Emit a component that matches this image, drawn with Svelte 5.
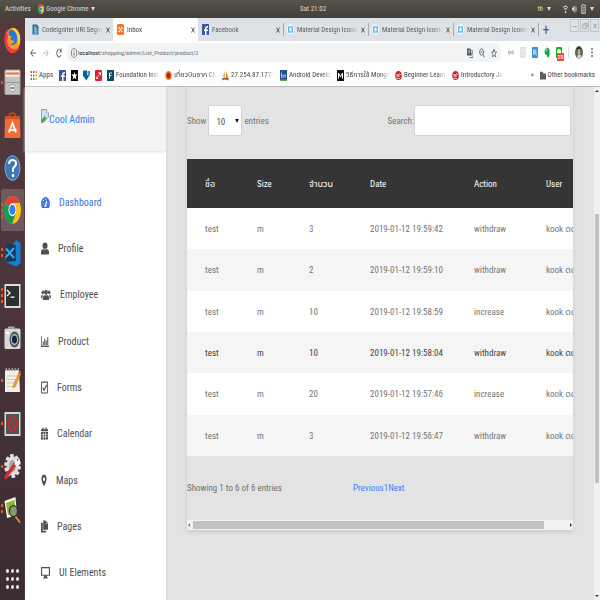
<script>
  const tabs = [
    { title: 'CodeIgniter URI Segme', icon: 'doc' },
    { title: 'Inbox', icon: 'xampp', active: true },
    { title: 'Facebook', icon: 'fb' },
    { title: 'Material Design Iconic F', icon: 'mat', sep: true },
    { title: 'Material Design Iconic F', icon: 'mat', sep: true },
    { title: 'Material Design Iconic F', icon: 'mat', sep: true }
  ];
  const bookmarks = [
    { icon: 'apps', title: 'Apps', w: 29 },
    { icon: 'fb', title: '', w: 12 },
    { icon: 'star', title: '', w: 12 },
    { icon: 'down', title: '', w: 12 },
    { icon: 'red', title: '', w: 12 },
    { icon: 'found', title: 'Foundation Insi', w: 58 },
    { icon: 'sun', title: 'เที่ยวบินจาก CNX', w: 57 },
    { icon: 'pma', title: '27.254.87.177:81', w: 58 },
    { icon: 'bn', title: 'Android Develop', w: 57 },
    { icon: 'med', title: 'วิธีการใช้ Mongo', w: 58 },
    { icon: 'cir', title: 'Beginner Learni', w: 57 },
    { icon: 'cir', title: 'Introductory Jav', w: 57 }
  ];
  const menu = [
    { title: 'Dashboard', w: 9, icon: 'dash', active: true },
    { title: 'Profile', w: 8, icon: 'user' },
    { title: 'Employee', w: 10, icon: 'users' },
    { title: 'Product', w: 8, icon: 'chart' },
    { title: 'Forms', w: 7, icon: 'check' },
    { title: 'Calendar', w: 7, icon: 'cal' },
    { title: 'Maps', w: 6, icon: 'pin' },
    { title: 'Pages', w: 7, icon: 'copy' },
    { title: 'UI Elements', w: 9, icon: 'desk' }
  ];
  const dock = [
    { name: 'firefox', label: 'Firefox', dots: 0 },
    { name: 'files', label: 'Files', dots: 1 },
    { name: 'soft', label: 'Ubuntu Software', dots: 0 },
    { name: 'help', label: 'Help', dots: 0 },
    { name: 'chrome', label: 'Google Chrome', dots: 3, active: true },
    { name: 'code', label: 'Visual Studio Code', dots: 2 },
    { name: 'term', label: 'Terminal', dots: 3 },
    { name: 'cam', label: 'Shotwell', dots: 0 },
    { name: 'note', label: 'Text Editor', dots: 1 },
    { name: 'no', label: 'Blocked window', dots: 1 },
    { name: 'gear', label: 'Settings', dots: 1 },
    { name: 'find', label: 'Image Viewer', dots: 2 }
  ];
  const columns = ['ชื่อ', 'Size', 'จำนวน', 'Date', 'Action', 'User'];
  const rows = [
    ['test', 'm', '3', '2019-01-12 19:59:42', 'withdraw', 'kook ดด'],
    ['test', 'm', '2', '2019-01-12 19:59:10', 'withdraw', 'kook ดด'],
    ['test', 'm', '10', '2019-01-12 19:58:59', 'increase', 'kook ดด'],
    ['test', 'm', '10', '2019-01-12 19:58:04', 'withdraw', 'kook ดด'],
    ['test', 'm', '20', '2019-01-12 19:57:46', 'increase', 'kook ดด'],
    ['test', 'm', '3', '2019-01-12 19:56:47', 'withdraw', 'kook ดด']
  ];
  let query = $state('');
</script>

{#snippet chromeLogo()}
  <circle cx="12" cy="12" r="12" fill="#fbc116" />
  <path d="M12 12 1.6 6A12 12 0 0 1 22.4 6H12Z" fill="#db4437" />
  <path d="M1.6 6A12 12 0 0 0 12 24L17 15 12 12Z" fill="#109d58" />
  <path d="M22.4 6H12v6l5 3-5 9A12 12 0 0 0 22.4 6Z" fill="#fbc116" />
  <circle cx="12" cy="12" r="5.6" fill="#fff" />
  <circle cx="12" cy="12" r="4.4" fill="#3b7df0" />
{/snippet}

{#snippet fav(name)}
  <svg class="fav" viewBox="0 0 14 22" preserveAspectRatio="none" aria-hidden="true">
    {#if name === 'doc'}
      <path d="M1 1h9l3 4v16H1Z" fill="#1d6e9f" /><path d="M4 6h5M4 10h7M4 14h7M4 18h7" stroke="#fff" stroke-width="1.6" />
    {:else if name === 'xampp'}
      <rect width="14" height="22" rx="3" fill="#f37623" /><path d="M4 6l6 10M10 6L4 16M4 6v4M10 6v4M4 16v-3M10 16v-3" stroke="#fff" stroke-width="1.600" />
    {:else if name === 'fb'}
      <rect width="14" height="22" rx="1" fill="#3b5a9a" /><path d="M9 22v-8h3v-3H9V9q0-2 3-2V4Q6 3 6 9v2H4v3h2v8Z" fill="#fff" />
    {:else if name === 'mat'}
      <ellipse cx="7" cy="11" rx="7" ry="10" fill="#fff" /><rect x="3.5" y="6" width="7" height="10" fill="none" stroke="#4aaee8" stroke-width="2.5" />
    {:else if name === 'apps'}
      <path d="M1 4h3M6 4h3M1 11h3" stroke="#e2483c" stroke-width="4" /><path d="M11 4h3M11 11h3" stroke="#f0a030" stroke-width="4" /><path d="M6 11h3" stroke="#4286f4" stroke-width="4" /><path d="M1 18h3M6 18h3" stroke="#2fa35a" stroke-width="4" /><path d="M11 18h3" stroke="#f0c030" stroke-width="4" />
    {:else if name === 'star'}
      <rect width="14" height="22" fill="#0a0a0a" /><path d="M7 4l1.6 5H13l-3.400 4 1.200 6L7 15.500 3.200 19l1.200-6L1 9h4.400Z" fill="#fff" />
    {:else if name === 'down'}
      <path d="M0 1h8v9h5l-6 11L0 12Z" fill="#0b6796" /><path d="M9 2h5v10L9 8Z" fill="#2796c8" />
    {:else if name === 'red'}
      <rect width="14" height="22" rx="2" fill="#ea1d2c" /><path d="M3 12l4 6H3ZM6 5h6v7Z" fill="#fff" /><path d="M2 18L12 4" stroke="#fff" />
    {:else if name === 'found'}
      <rect width="14" height="22" fill="#104a64" /><path d="M5 17V6h5M5 11h4" fill="none" stroke="#fff" stroke-width="1.800" />
    {:else if name === 'sun'}
      <ellipse cx="7" cy="11" rx="6.500" ry="9" fill="#f08a2c" /><ellipse cx="7" cy="11" rx="4" ry="6" fill="#bd1e24" />
    {:else if name === 'pma'}
      <path d="M6 1v13H1Z" fill="#f7b65d" /><path d="M8 3l5 12H8Z" fill="#ed842b" /><path d="M0 17q7-4 14 0l-2 4Q6 17 1 21Z" fill="#8e5b4c" />
    {:else if name === 'bn'}
      <rect width="14" height="22" fill="#295090" /><path d="M3 5v10h3v-5H3M8 15v-5h3v5" fill="none" stroke="#d7e4f5" stroke-width="1.300" /><path d="M0 19h14v3H0z" fill="#66a34e" />
    {:else if name === 'med'}
      <rect width="14" height="22" fill="#111" /><path d="M3 17V6l4 8 4-8v11" fill="none" stroke="#fff" stroke-width="2" />
    {:else}
      <ellipse cx="7" cy="11" rx="6.500" ry="9" fill="#c9222d" /><path d="M4 15V8l4 6V8M8 6l4 4M3 17h7" fill="none" stroke="#fff" stroke-width="1.300" />
    {/if}
  </svg>
{/snippet}

<div class="desktop">
  <header class="topbar">
    <span class="act">Activities</span>
    <span class="appname">
      <svg class="mini" viewBox="0 0 24 24" preserveAspectRatio="none">{@render chromeLogo()}</svg>
      Google Chrome <i class="caret"></i>
    </span>
    <span class="clock">Sat 21:02</span>
    <span class="status">
      th <i class="caret"></i>
      <svg class="st wifi" viewBox="0 0 16 22" preserveAspectRatio="none"><path d="M1 8q7-7 14 0M4 12q4-4 8 0" fill="none" stroke="#ddd9d0" stroke-width="2.500" /><circle cx="8" cy="18" r="2.500" fill="#ddd9d0" /></svg>
      <svg class="st" viewBox="0 0 16 22" preserveAspectRatio="none"><path d="M0 8h3l5-6v18l-5-6H0Z" fill="#ddd9d0" /><path d="M10 7q3 4 0 8M12 4q5 7 0 14" fill="none" stroke="#ddd9d0" stroke-width="1.500" /></svg>
      <svg class="st" viewBox="0 0 14 24" preserveAspectRatio="none"><path d="M2 3h3V1h4v2h3v20H2Z" fill="none" stroke="#ddd9d0" stroke-width="2" /><path d="M4 8h6M4 12h6M4 16h6M4 20h6" stroke="#ddd9d0" stroke-width="2" /></svg>
      <i class="caret"></i>
    </span>
  </header>

  <div class="body">
    <nav class="dock" aria-label="Dock">
      <ul>
        {#each dock as d}
          <li class:active={d.active}>
            <span class="dots">{#each Array(d.dots) as _}<i></i>{/each}</span>
            <button aria-label={d.label}>
              <svg viewBox="0 0 34 56" preserveAspectRatio="none" aria-hidden="true">
                {#if d.name === 'firefox'}
                  <ellipse cx="17" cy="29" rx="15" ry="25" fill="#ff9a1f" />
                  <path d="M7 5Q0 15 1 31q3 22 16 23 10-1 14-12-12 10-21-1Q4 33 8 21 5 12 7 5Z" fill="#f2394b" />
                  <path d="M17 3q11 1 15 16 2 13-3 22 0-18-6-26-5-5-6-12Z" fill="#ffcf35" />
                  <path d="M10 9q9-4 14 5 5 11 0 20-5 7-12 2 8 0 9-6-5-1-9-4l4-5-6-2q-2-6 0-10Z" fill="#2477dd" />
                {:else if d.name === 'files'}
                  <rect x="1" y="3" width="32" height="51" rx="3" fill="#a3a3a0" /><rect x="3" y="5" width="28" height="14" fill="#e9e8e4" /><path d="M4 11h26" stroke="#df7a3c" stroke-width="4" /><rect x="3" y="18" width="28" height="34" fill="#c2c2bf" /><path d="M3 29h28" stroke="#888" stroke-width="1.500" /><rect x="12" y="34" width="10" height="12" rx="2" fill="#f5f5f5" stroke="#777" /><path d="M14 40h6" stroke="#555" stroke-width="3" />
                {:else if d.name === 'soft'}
                  <path d="M11 16V8q6-9 12 0v8" fill="none" stroke="#cc4b1c" stroke-width="3" /><path d="M2 11h30l1 43H1Z" fill="#ef6d35" /><path d="M2 11h30v5H2z" fill="#d7501e" /><path d="M10 43 17 24l7 19M9 38h16" fill="none" stroke="#fff" stroke-width="3.500" />
                {:else if d.name === 'help'}
                  <ellipse cx="17" cy="28" rx="15" ry="25" fill="#3f79b4" stroke="#9bbcdc" stroke-width="1.500" /><path d="M10 20q1-9 8-8 9 2 5 11l-5 6v7" fill="none" stroke="#fff" stroke-width="4" /><ellipse cx="18" cy="43" rx="2.500" ry="3.500" fill="#fff" />
                {:else if d.name === 'chrome'}
                  <g transform="scale(1.4 2.3)">{@render chromeLogo()}</g>
                {:else if d.name === 'code'}
                  <path d="M24 2l9 6v40l-9 7L5 47v-5l18 2V12L3 42l-2-4Z" fill="#1480cf" /><path d="M3 9l20 3v32L5 46Z" fill="#17395a" /><path d="M4 19l16 19M4 36l16-18" stroke="#3ba8f2" stroke-width="4" />
                {:else if d.name === 'term'}
                  <rect x="1" y="4" width="32" height="48" fill="#dedede" /><rect x="4" y="8" width="26" height="40" fill="#2b2f30" /><path d="M6 16l6 6-6 6M13 30h8" fill="none" stroke="#fff" stroke-width="2.500" />
                {:else if d.name === 'cam'}
                  <rect x="1" y="9" width="32" height="41" rx="3" fill="#d8d8d4" /><path d="M8 9h13V5H8z" fill="#aaa" /><ellipse cx="21" cy="31" rx="10" ry="16" fill="#555b60" /><ellipse cx="21" cy="31" rx="7" ry="11" fill="#b7c1c8" /><ellipse cx="21" cy="31" rx="5" ry="8" fill="#14233c" /><path d="M4 15h6v5H4z" fill="#fff" />
                {:else if d.name === 'note'}
                  <path d="M2 6h28l2 44H2Z" fill="#f2f0e6" /><path d="M3 5h27" stroke="#989898" stroke-width="6" stroke-dasharray="3 3" /><path d="M6 18h20M6 25h18M6 32h14M6 39h18" stroke="#bdbdb4" stroke-width="1.500" /><path d="M18 42l2-9L31 9l3 4-11 25Z" fill="#f4a02c" stroke="#b6661c" /><path d="M29 12l3-6 3 5-2 5Z" fill="#d9414e" />
                {:else if d.name === 'no'}
                  <rect x="1" y="4" width="32" height="48" fill="#d8d8d8" /><rect x="4" y="8" width="26" height="40" fill="#535353" /><ellipse cx="17" cy="28" rx="8" ry="13" fill="none" stroke="#cc2d2d" stroke-width="3" /><path d="M12 18L22 38" stroke="#cc2d2d" stroke-width="3" />
                {:else if d.name === 'gear'}
                  <ellipse cx="17" cy="28" rx="13.500" ry="21" fill="none" stroke="#e6e6e6" stroke-width="6" stroke-dasharray="7 4" /><ellipse cx="17" cy="28" rx="12" ry="20" fill="#dcdcdc" /><ellipse cx="17" cy="28" rx="7" ry="12" fill="#a9a9a9" /><path d="M4 50L22 24" stroke="#d0312d" stroke-width="7" stroke-linecap="round" /><path d="M21 25l1-12 5 6 3-8 3 10-6 9Z" fill="#f6f6f6" />
                {:else}
                  <path d="M1 12l22-8 3 36-20 6Z" fill="#f5f6ef" /><path d="M4 16l17-6 2 25-15 5Z" fill="#8cb935" /><path d="M22 42l10 13" stroke="#d79a36" stroke-width="3.500" /><ellipse cx="19" cy="32" rx="8" ry="11" fill="#8a9a6b" stroke="#2b2b2b" stroke-width="2.500" />
                {/if}
              </svg>
            </button>
          </li>
        {/each}
      </ul>
      <button class="launcher" aria-label="Show applications">
        {#each Array(9) as _}<i></i>{/each}
      </button>
    </nav>

    <div class="window">
      <div class="tabs">
        {#each tabs as t}
          <div class="tab" class:on={t.active} class:sep={t.sep}>
            {@render fav(t.icon)}
            <span class="fade">{t.title}</span>
            <button aria-label="Close tab"><svg viewBox="0 0 8 12" preserveAspectRatio="none"><path d="M1 1l6 10M7 1L1 11" stroke="#4e5257" stroke-width="1.800" /></svg></button>
          </div>
        {/each}
        <button class="plus" aria-label="New tab">+</button>
        <div class="wm">
          <button aria-label="Minimise"><svg viewBox="0 0 10 14"><path d="M2 8h6" stroke="#999" stroke-width="1.500" /></svg></button>
          <button aria-label="Restore"><svg viewBox="0 0 10 14"><path d="M1 5h6v7H1zM3 5V2h6v7H7" fill="none" stroke="#999" stroke-width="1.200" /></svg></button>
          <button aria-label="Close"><svg viewBox="0 0 10 14"><path d="M2 3l6 8M8 3l-6 8" stroke="#999" stroke-width="1.500" /></svg></button>
        </div>
      </div>

      <div class="toolbar">
        <button aria-label="Back"><svg viewBox="0 0 14 20" preserveAspectRatio="none"><path d="M14 10H2M7 3l-5 7 5 7" fill="none" stroke="#50555a" stroke-width="2" /></svg></button>
        <button aria-label="Forward"><svg viewBox="0 0 14 20" preserveAspectRatio="none"><path d="M0 10h12M7 3l5 7-5 7" fill="none" stroke="#b5b8bb" stroke-width="2" /></svg></button>
        <button aria-label="Reload"><svg viewBox="0 0 14 20" preserveAspectRatio="none"><path d="M12 6Q8 0 4 4-1 11 4 17q5 3 8-3M12 1v7H8" fill="none" stroke="#50555a" stroke-width="2" /></svg></button>
        <div class="omni">
          <svg class="info" viewBox="0 0 14 20" preserveAspectRatio="none"><ellipse cx="7" cy="10" rx="6" ry="9" fill="none" stroke="#5f6368" stroke-width="1.500" /><path d="M7 9v6M7 5v2" stroke="#5f6368" stroke-width="2" /></svg>
          <span class="url"><b>localhost</b>/shopping/admin/List_Product/product/2</span>
          <svg viewBox="0 0 14 20" preserveAspectRatio="none"><path d="M0 1h8l3 14H0Z" fill="#555a5f" /><path d="M7 5h7v14H6" fill="none" stroke="#555a5f" stroke-width="1.500" /><path d="M3 6h4M5 5v6" stroke="#fff" stroke-width="1.300" /><path d="M9 9h4l-3 6" fill="none" stroke="#555a5f" /></svg>
          <svg viewBox="0 0 14 20" preserveAspectRatio="none"><ellipse cx="6" cy="8" rx="4.500" ry="6.500" fill="none" stroke="#555a5f" stroke-width="1.800" /><path d="M9 13l4 6M4 8h4" stroke="#555a5f" stroke-width="1.800" /></svg>
          <svg viewBox="0 0 14 20" preserveAspectRatio="none"><path d="M7 2l1.600 6H13l-3.500 4 1.300 6L7 14.500 3.200 18l1.300-6L1 8h4.400Z" fill="none" stroke="#555a5f" stroke-width="1.600" /></svg>
        </div>
        <div class="ext">
          <svg viewBox="0 0 14 22" preserveAspectRatio="none"><path d="M3 7q-3 4 0 8M11 7q3 4 0 8M5 9l4 4M9 9l-4 4" fill="none" stroke="#666" stroke-width="1.500" /></svg>
          <svg viewBox="0 0 14 22" preserveAspectRatio="none"><rect width="14" height="22" rx="2" fill="#e2e2e2" /><path d="M3 7h8M3 12h8M3 17h5" stroke="#f7f7f7" stroke-width="2" /></svg>
          <svg viewBox="0 0 14 22" preserveAspectRatio="none"><rect width="14" height="22" rx="2" fill="#3a8fda" /><path d="M4 16V6h3M4 11h3M9 5v9q0 3 2 2" fill="none" stroke="#fff" stroke-width="1.800" /></svg>
          <svg viewBox="0 0 14 22" preserveAspectRatio="none"><path d="M1 8l5-7q7 0 7 7 1 10-3 13-4 0-3-5-6 0-6-8Z" fill="#12a84a" /><path d="M6 1v7H1" fill="none" stroke="#fff" /></svg>
          <span class="badged">
            <svg viewBox="0 0 14 22" preserveAspectRatio="none"><rect width="14" height="22" rx="3" fill="#09b40b" /><ellipse cx="7" cy="10" rx="5" ry="6" fill="#fff" /></svg>
            <em>29</em>
          </span>
          <i class="bar"></i>
          <svg class="avatar" viewBox="0 0 16 24" preserveAspectRatio="none"><ellipse cx="8" cy="12" rx="8" ry="12" fill="#5d6b54" /><path d="M3 4q6-6 9 1l-2 7-5-1Z" fill="#3c2b29" /><ellipse cx="8" cy="10" rx="3" ry="5" fill="#c9a596" /><path d="M4 22q0-7 5-7 4 1 4 6-4 5-9 1Z" fill="#cfd1d4" /></svg>
          <svg class="dots3" viewBox="0 0 6 22" preserveAspectRatio="none"><path d="M1 2h4v4H1zM1 9h4v4H1zM1 16h4v4H1z" fill="#5a5e62" /></svg>
        </div>
      </div>

      <div class="bookmarks">
        {#each bookmarks as b}
          <a href="#bookmark" style="width:{b.w}px" aria-label={b.title || b.icon}>
            {@render fav(b.icon)}
            {#if b.title}<span class="fade">{b.title}</span>{/if}
          </a>
        {/each}
        <span class="more">»</span>
        <a href="#other" class="other">
          <svg class="fav" viewBox="0 0 14 22" preserveAspectRatio="none"><path d="M0 2h6l2 4h6v15H0Z" fill="#5a5e62" /></svg>
          Other bookmarks
        </a>
      </div>

      <div class="page">
        <aside>
          <a class="logo" href="#home">
            <svg viewBox="0 0 16 26" preserveAspectRatio="none"><path d="M1 1h10l4 6v8L5 25H1Z" fill="#cbdcf5" stroke="#8b8f93" stroke-width="1.500" /><path d="M1 21L7 13l4 4-7 8H1Z" fill="#4ca147" /><path d="M11 1v6h4" fill="#fff" stroke="#8b8f93" /><path d="M4 8q2-3 4 0Z" fill="#fff" /></svg><span>Cool Admin</span>
          </a>
          <ul>
            {#each menu as m}
              <li>
                <a href="#menu" class:cur={m.active}>
                  <svg style="width:{m.w}px" viewBox="0 0 16 24" preserveAspectRatio="none" fill="currentColor" aria-hidden="true">
                    {#if m.icon === 'dash'}
                      <path d="M2 22q-2-4-2-8Q1 3 8 2q7 1 8 12 0 4-2 8Z" /><path d="M8 18l2-9M3 14h1M4 8l1 1M8 5v2M12 14h1" stroke="#fff" stroke-width="2" /><circle cx="8" cy="18" r="2" fill="#fff" />
                    {:else if m.icon === 'user'}
                      <ellipse cx="8" cy="7" rx="5" ry="6" /><path d="M0 23v-4q0-5 4-6 4 2 8 0 4 1 4 6v4Z" />
                    {:else if m.icon === 'users'}
                      <ellipse cx="8" cy="8" rx="3" ry="5" /><ellipse cx="3" cy="8" rx="2" ry="3.500" /><ellipse cx="13" cy="8" rx="2" ry="3.500" /><path d="M3 22v-4q0-4 3-5 2 2 4 0 3 1 3 5v4ZM0 17q0-5 3-4l-1 6H0ZM16 17q0-5-3-4l1 6h2Z" />
                    {:else if m.icon === 'chart'}
                      <path d="M0 2h1.500v18H16v2H0ZM3.500 12h2v7h-2ZM6.500 7h2v12h-2ZM9.500 10h2v9h-2ZM12.500 4h2v15h-2Z" />
                    {:else if m.icon === 'check'}
                      <rect x="1" y="2" width="14" height="20" rx="1" fill="none" stroke="currentColor" stroke-width="2" /><path d="M4 12l3 5 6-10" fill="none" stroke="currentColor" stroke-width="2.500" />
                    {:else if m.icon === 'cal'}
                      <path d="M0 4h3V1h3v3h4V1h3v3h3v4H0ZM0 9h16v14H0Z" /><path d="M1 14h14M1 18h14M5.500 10v12M10.500 10v12" stroke="#fff" stroke-width="1.300" />
                    {:else if m.icon === 'pin'}
                      <path fill-rule="evenodd" d="M8 1q7 1 7 9-1 5-7 13Q2 15 1 10 1 2 8 1Zm0 5q-3 1-3 4t3 3q3 0 3-3T8 6Z" />
                    {:else if m.icon === 'copy'}
                      <path d="M5 1h6v6h5v11H5ZM12 1l4 5h-4ZM0 5h4v15h8v3H0Z" />
                    {:else}
                      <path d="M1 3h14v14H1Z" fill="none" stroke="currentColor" stroke-width="2" /><path d="M6 17h4l1 4h1v2H4v-2h1Z" />
                    {/if}
                  </svg>
                  {m.title}
                </a>
              </li>
            {/each}
          </ul>
        </aside>

        <main>
          <section class="card">
            <div class="controls">
              <label>Show
                <span class="sel"><select><option>10</option><option>25</option><option>50</option></select></span>
                entries</label>
              <label class="search">Search:<input type="search" bind:value={query} /></label>
            </div>
            <div class="clip">
              <table>
                <colgroup><col class="c1" /><col class="c2" /><col class="c3" /><col class="c4" /><col class="c5" /><col class="c6" /></colgroup>
                <thead><tr>{#each columns as c}<th>{c}</th>{/each}</tr></thead>
                <tbody>
                  {#each rows as r, i}
                    <tr class:hover={i === 3}>{#each r as c}<td>{c}</td>{/each}</tr>
                  {/each}
                </tbody>
              </table>
            </div>
            <div class="foot">
              <span>Showing 1 to 6 of 6 entries</span>
              <span class="pager"><a href="#prev">Previous</a><a href="#p1">1</a><a href="#next">Next</a></span>
            </div>
            <div class="hbar"><i class="l"></i><span></span><i class="r"></i></div>
          </section>
        </main>
        <div class="vbar"><i class="u"></i><span></span><i class="d"></i></div>
      </div>
    </div>
  </div>
</div>

<style>
  :global(body) { margin: 0; }
  .desktop {
    height: 100vh; display: flex; flex-direction: column; overflow: hidden;
    font-family: "Roboto Condensed", "Ubuntu Condensed", Roboto, "Noto Sans Thai", sans-serif; font-size: 7px; color: #555;
  }
  .desktop * { box-sizing: border-box; }
  button { border: 0; background: none; padding: 0; font: inherit; color: inherit; display: flex; }
  ul { list-style: none; margin: 0; padding: 0; }
  a { text-decoration: none; color: inherit; }
  svg { display: block; flex: none; }

  .topbar { height: 18px; flex: none; position: relative; display: flex; align-items: center; padding: 0 6px 0 5px; background: linear-gradient(#57534a, #403f3a); color: #dfdbd2; white-space: nowrap; }
  .act { width: 25px; }
  .appname { display: flex; align-items: center; gap: 2px; margin-left: 8px; }
  .mini { width: 6px; height: 10px; }
  .clock { position: absolute; left: 50%; width: 26px; text-align: center; }
  .status { margin-left: auto; display: flex; align-items: center; gap: 4px; }
  .st { width: 5px; height: 10px; }
  .wifi { margin-left: 8px; }
  .caret { border: 2px solid transparent; border-top: 4px solid #dfdbd2; border-bottom: 0; }

  .body { flex: 1; display: flex; min-height: 0; }
  .dock { width: 25px; flex: none; display: flex; flex-direction: column; justify-content: space-between; background: linear-gradient(#553a3d, #4b343b 50%, #3c2c33); }
  .dock ul { display: grid; grid-auto-rows: 43px 42px 43px; }
  .dock li { display: flex; align-items: center; margin: 0 1px; border-radius: 2px; }
  .dock li.active { background: #705a60; }
  .dock li svg { width: 17px; height: 28px; }
  .dots { width: 3px; display: flex; flex-direction: column; gap: 3px; }
  .dots i { width: 2px; height: 3px; background: #e95420; }
  .launcher { display: grid; grid-template-columns: repeat(3, 3px); gap: 4px 2px; justify-content: center; padding-bottom: 11px; }
  .launcher i { width: 3px; height: 4px; border-radius: 50%; background: #eee; }

  .window { flex: 1; min-width: 0; display: flex; flex-direction: column; background: #fff; }
  .tabs { height: 23px; flex: none; display: flex; align-items: stretch; background: #dee1e6; padding-left: 3px; color: #5a5e63; }
  .tab { flex: 0 1 85px; min-width: 0; display: flex; align-items: center; gap: 3px; padding: 0 3px 0 4px; }
  .tab.on { background: #fff; border-radius: 3px 3px 0 0; color: #3c4043; }
  .tab.sep { background: linear-gradient(#a5a9ae, #a5a9ae) left center / 1px 13px no-repeat; }
  .tab svg:not(.fav) { width: 4px; height: 6px; }
  .fav { width: 7px; height: 11px; }
  .fade { flex: 1; min-width: 0; overflow: hidden; white-space: nowrap; line-height: 14px; mask-image: linear-gradient(90deg, #000 calc(100% - 10px), transparent); }
  .plus { width: 16px; align-items: center; justify-content: center; font-size: 14px; background: linear-gradient(#a5a9ae, #a5a9ae) left center / 1px 13px no-repeat; }
  .wm { margin-left: auto; display: flex; gap: 1px; padding: 1px 1px 0 0; align-items: flex-start; }
  .wm button { width: 9px; height: 13px; border: 1px solid #c2c4c8; align-items: center; justify-content: center; }
  .wm svg { width: 6px; height: 8px; }

  .toolbar { height: 23px; flex: none; display: flex; align-items: center; gap: 7px; padding: 0 7px 0 5px; }
  .toolbar svg { width: 6px; height: 10px; }
  .omni { flex: 1; min-width: 0; height: 19px; display: flex; align-items: center; gap: 6px; background: #f1f3f4; border-radius: 8px; padding: 0 4px; margin-left: -2px; }
  .omni .info { margin-right: -5px; }
  .url { flex: 1; white-space: nowrap; overflow: hidden; color: #6d7176; font-size: 6px; line-height: 12px; }
  .url b { font-weight: normal; color: #202124; }
  .ext { display: flex; align-items: center; gap: 6px; }
  .ext svg { height: 11px; }
  .ext .avatar { width: 8px; height: 13px; }
  .ext .dots3 { width: 2px; margin-left: 2px; }
  .badged { position: relative; }
  .badged em { position: absolute; left: 1px; top: 6px; width: 7px; height: 8px; line-height: 8px; font-size: 6px; font-style: normal; text-align: center; color: #fff; background: #f04a35; }
  .bar { width: 1px; height: 11px; background: #ddd; }

  .bookmarks { height: 23px; flex: none; display: flex; align-items: center; padding: 0 5px; border-bottom: 1px solid #b9babb; color: #44474a; }
  .bookmarks a { display: flex; align-items: center; gap: 2px; padding-right: 5px; flex: 0 0 auto; }
  .bookmarks a:first-child { padding-right: 2px; }
  .bookmarks a:first-child .fade { mask-image: none; }
  .more { margin-left: auto; }
  .bookmarks a.other { margin-left: 6px; padding: 0; gap: 2px; white-space: nowrap; }
  .other .fav { width: 6px; height: 9px; }

  .page { flex: 1; min-height: 0; display: flex; background: #e3e3e3; font-size: 9px; }
  aside { width: 141px; flex: none; background: #fff; box-shadow: 1px 0 2px #d8d8d8; font-size: 10px; }
  .logo { height: 64px; display: flex; align-items: center; padding-left: 16px; background: #f4f4f4; box-shadow: 0 1px 3px #ddd; color: #2f7cf6; }
  .logo svg { width: 8px; height: 14px; margin-bottom: 6px; }
  aside ul { padding-top: 28px; display: grid; grid-auto-rows: 46px 46px 47px; }
  aside li { display: flex; align-items: center; padding-left: 16px; }
  aside li a { display: flex; align-items: center; gap: 9px; color: #505050; }
  aside li a.cur { color: #4272d7; }
  aside li svg { height: 13px; }

  main { flex: 1; min-width: 0; padding: 0 21px; color: #757575; }
  .card { box-shadow: 0 2px 4px #c8c8c8; padding-top: 18px; background: #e3e3e3; }
  .controls { height: 31px; display: flex; align-items: center; justify-content: space-between; padding-right: 2px; }
  label { display: flex; align-items: center; gap: 2px; }
  .search { gap: 0; }
  .sel { position: relative; display: flex; }
  .sel::after { content: ""; position: absolute; right: 3px; top: 14px; border: 2px solid transparent; border-top: 4px solid #222; border-bottom: 0; pointer-events: none; }
  select, input { height: 31px; font: inherit; color: #495057; background: #fff; border: 1px solid #ced4da; border-radius: 2px; outline: 0; appearance: none; margin: 0; }
  select { width: 34px; padding: 2px 0 0 7px; }
  input { width: 157px; padding: 0 4px; }

  .clip { margin-top: 23px; overflow: hidden; }
  table { border-collapse: collapse; table-layout: fixed; width: 120%; min-width: 420px; }
  .c1, .c2 { width: 52px; }
  .c3 { width: 61px; }
  .c4 { width: 104px; }
  .c5 { width: 72px; }
  th, td { padding: 0 0 0 18px; text-align: left; font-weight: normal; white-space: nowrap; line-height: 16px; }
  th { height: 49px; background: #353535; color: #fff; }
  td { height: 41px; background: #fff; }
  tr:nth-child(3n + 2) td { height: 42px; }
  tr:nth-child(even) td { background: #f5f5f5; }
  tr.hover td { color: #444; }
  .foot { height: 64px; display: grid; grid-template-columns: 43% 1fr; align-items: center; color: #707070; white-space: nowrap; }
  .pager { color: #3b82f6; display: flex; }
  .hbar { height: 10px; display: flex; align-items: center; justify-content: space-between; background: #f1f1f1; padding: 0 1px; }
  .hbar span { flex: 1; height: 8px; margin: 0 26px 0 3px; background: #c1c1c1; }
  .l, .r, .u, .d { border: 2px solid transparent; }
  .l { border-right-color: #777; border-left: 0; }
  .r { border-left-color: #333; border-right: 0; }
  .vbar { width: 6px; flex: none; background: #f1f1f1; display: flex; flex-direction: column; align-items: center; padding: 3px 0; }
  .vbar span { width: 4px; height: 53%; margin: 122px 0 auto; background: #c1c1c1; }
  .u { border-bottom-color: #333; border-top: 0; }
  .d { border-top-color: #333; border-bottom: 0; }
</style>
